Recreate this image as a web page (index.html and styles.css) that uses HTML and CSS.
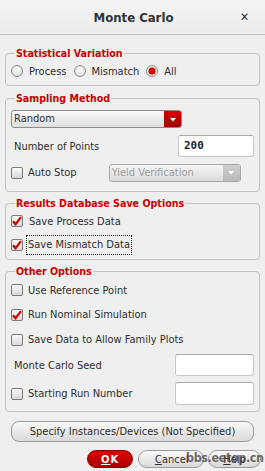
FILE: index.html
```html
<!DOCTYPE html>
<html>
<head>
<meta charset="utf-8">
<link rel="stylesheet" href="styles.css">
</head>
<body>
<div class="window">
  <div class="titlebar">
    <span class="title">Monte Carlo</span>
    <span class="close">✕</span>
  </div>
  <div class="content">
    <fieldset class="group g1">
      <legend>Statistical Variation</legend>
      <div class="radios">
        <span class="radio"></span><span class="rlabel">Process</span>
        <span class="radio"></span><span class="rlabel">Mismatch</span>
        <span class="radio on"></span><span class="rlabel">All</span>
      </div>
    </fieldset>

    <fieldset class="group g2">
      <legend>Sampling Method</legend>
      <div class="combo random">
        <span class="combo-text">Random</span>
        <span class="combo-btn red"><svg width="8" height="5" viewBox="0 0 8 5"><path d="M1 1h6L4 4.5z" fill="#fff"/></svg></span>
      </div>
      <div class="row points">
        <span class="label">Number of Points</span>
        <span class="field w75 mono">200</span>
      </div>
      <div class="row autostop">
        <span class="check"></span><span class="clabel">Auto Stop</span>
        <div class="combo disabled">
          <span class="combo-text">Yield Verification</span>
          <span class="combo-btn grey"><svg width="8" height="5" viewBox="0 0 8 5"><path d="M1 1h6L4 4.5z" fill="#fff"/></svg></span>
        </div>
      </div>
    </fieldset>

    <fieldset class="group g3">
      <legend>Results Database Save Options</legend>
      <div class="row r22">
        <span class="check on"><svg width="12" height="12" viewBox="0 0 12 12"><path d="M2 6.2l2.6 3L10 2.2" fill="none" stroke="#d00000" stroke-width="2.2"/></svg></span><span class="clabel gap2">Save Process Data</span>
      </div>
      <div class="row r20 mt3">
        <span class="check on"><svg width="12" height="12" viewBox="0 0 12 12"><path d="M2 6.2l2.6 3L10 2.2" fill="none" stroke="#d00000" stroke-width="2.2"/></svg></span><span class="clabel focus">Save Mismatch Data</span>
      </div>
    </fieldset>

    <fieldset class="group g4">
      <legend>Other Options</legend>
      <div class="row r24">
        <span class="check"></span><span class="clabel">Use Reference Point</span>
      </div>
      <div class="row r25">
        <span class="check on"><svg width="12" height="12" viewBox="0 0 12 12"><path d="M2 6.2l2.6 3L10 2.2" fill="none" stroke="#d00000" stroke-width="2.2"/></svg></span><span class="clabel">Run Nominal Simulation</span>
      </div>
      <div class="row r25">
        <span class="check"></span><span class="clabel">Save Data to Allow Family Plots</span>
      </div>
      <div class="row seed">
        <span class="label">Monte Carlo Seed</span>
        <span class="field w78"></span>
      </div>
      <div class="row start">
        <span class="check"></span><span class="clabel">Starting Run Number</span>
        <span class="field w78 push"></span>
      </div>
    </fieldset>

    <div class="btn specify">Specify Instances/Devices (Not Specified)</div>

    <div class="actions">
      <div class="btn ok"><u>O</u>K</div>
      <div class="btn cancel"><u>C</u>ancel</div>
      <div class="btn help"><u>H</u>elp</div>
      <span class="watermark">bbs.eetop.cn</span>
    </div>
  </div>
</div>
</body>
</html>
```
FILE: styles.css
```css
* { box-sizing: border-box; }
html, body { margin: 0; padding: 0; }
body {
  width: 265px;
  height: 471px;
  overflow: hidden;
  background: #efefef;
  font-family: "DejaVu Sans Condensed", "DejaVu Sans", sans-serif;
  font-stretch: condensed;
  font-size: 11px;
  color: #2e2e2e;
}
.window { width: 265px; height: 471px; background: #efefef; }
.titlebar {
  height: 35px;
  border-bottom: 1px solid #bfbfbf;
  background: linear-gradient(#f4f4f4, #ececec);
  display: flex;
  align-items: center;
  justify-content: center;
  position: relative;
}
.title { font-size: 13px; font-weight: bold; color: #2e3436; margin-left: 2px; }
.close {
  position: absolute;
  right: 16px;
  top: 10px;
  font-size: 12px;
  font-weight: bold;
  color: #2e3436;
}
.content { padding: 0 5px; }
.group {
  margin: 0;
  padding: 0 5px 3px;
  border: 1px solid #c2c2c2;
  border-radius: 4px;
  min-width: 0;
}
.group legend {
  color: #cc0000;
  font-weight: bold;
  font-size: 10.6px;
  line-height: 14px;
  padding: 0 1px;
  margin-left: 4px;
}
.g1 { margin-top: 11px; }
.g2 { margin-top: 5px; padding-bottom: 9px; }
.g3 { margin-top: 4px; padding-bottom: 4px; }
.g4 { margin-top: 4px; padding-bottom: 6px; }

.radios { height: 22px; display: flex; align-items: center; }
.radio {
  width: 12px; height: 12px;
  border-radius: 50%;
  border: 1px solid #8a8a8a;
  background: radial-gradient(circle at 50% 35%, #ffffff, #d6d6d6);
  flex: none;
  position: relative;
}
.radio.on::after {
  content: "";
  position: absolute;
  left: 2px; top: 2px;
  width: 6px; height: 6px;
  border-radius: 50%;
  background: #e00000;
  box-shadow: 0 0 0 0.5px #900;
}
.rlabel { margin-left: 6px; margin-right: 7px; }

.row { display: flex; align-items: center; }
.r22 { height: 22px; }
.r20 { height: 20px; }
.r24 { height: 24px; }
.r25 { height: 25px; }
.mt3 { margin-top: 3px; }

.check {
  width: 12px; height: 12px;
  border: 1px solid #7a7a7a;
  border-radius: 2px;
  background: linear-gradient(#f8f8f8, #d8d8d8);
  flex: none;
  position: relative;
}
.check svg { position: absolute; left: -1px; top: -1px; }
.clabel { margin-left: 5px; }
.clabel.gap2 { margin-left: 6px; }
.clabel.focus {
  border: 1px dotted #222;
  padding: 0 1px 0 1px;
  height: 20px;
  line-height: 18px;
  margin-left: 3px;
}

.combo {
  display: flex;
  align-items: stretch;
  height: 18px;
  border: 1px solid #8c8c8c;
  border-radius: 3px;
  background: linear-gradient(#fbfbfb, #dedede);
  overflow: hidden;
}
.combo-text { flex: 1; padding-left: 2px; line-height: 16px; }
.combo-btn {
  width: 17px;
  display: flex;
  align-items: center;
  justify-content: center;
}
.combo-btn.red { background: linear-gradient(#d40000, #a00000); }
.combo-btn.grey { background: linear-gradient(#cfcfcf, #b9b9b9); }
.random { width: 171px; margin-top: 5px; }
.combo.disabled {
  width: 132px;
  margin-left: 32px;
  border-color: #a8a8a8;
  background: linear-gradient(#f4f4f4, #dcdcdc);
  color: #9a9a9a;
}

.points { height: 22px; margin-top: 7px; justify-content: space-between; }
.label { padding-left: 3px; }
.field {
  height: 22px;
  background: #fff;
  border: 1px solid #c8c8c8;
  border-top-color: #a9a9a9;
  border-radius: 3px;
}
.w75 { width: 76px; }
.w78 { width: 79px; }
.mono {
  font-family: "DejaVu Sans Mono", monospace;
  font-stretch: normal;
  font-weight: bold;
  font-size: 11px;
  line-height: 20px;
  padding-left: 5px;
  color: #222;
}
.autostop { height: 19px; margin-top: 6px; }

.seed { height: 22px; margin-top: 2px; justify-content: space-between; }
.start { height: 23px; margin-top: 6px; }
.start .field { height: 23px; }
.push { margin-left: auto; }

.btn {
  display: flex;
  align-items: center;
  justify-content: center;
  border: 1px solid #9a9a9a;
  border-radius: 9px;
  background: linear-gradient(#fafafa, #d9d9d9);
  color: #2e2e2e;
}
.specify {
  margin: 9px 6px 0 6px;
  height: 21px;
  border-radius: 8px;
}
.actions {
  display: flex;
  justify-content: flex-end;
  margin-top: 8px;
  margin-right: -1px;
  gap: 4px;
  position: relative;
}
.ok {
  width: 46px; height: 18px;
  background: linear-gradient(#e00000, #a80000);
  border-color: #8a0000;
  color: #fff;
  font-weight: bold;
  letter-spacing: 1px;
  margin-right: 1px;
}
.cancel { width: 66px; height: 18px; justify-content: flex-start; padding-left: 16px; }
.help { width: 53px; height: 18px; }
.watermark {
  position: absolute;
  left: 181px;
  top: 0px;
  font-family: "DejaVu Sans Condensed", "DejaVu Sans", sans-serif;
  font-weight: bold;
  font-size: 12.5px;
  color: rgba(60,60,60,0.75);
  letter-spacing: -0.4px;
}
```
